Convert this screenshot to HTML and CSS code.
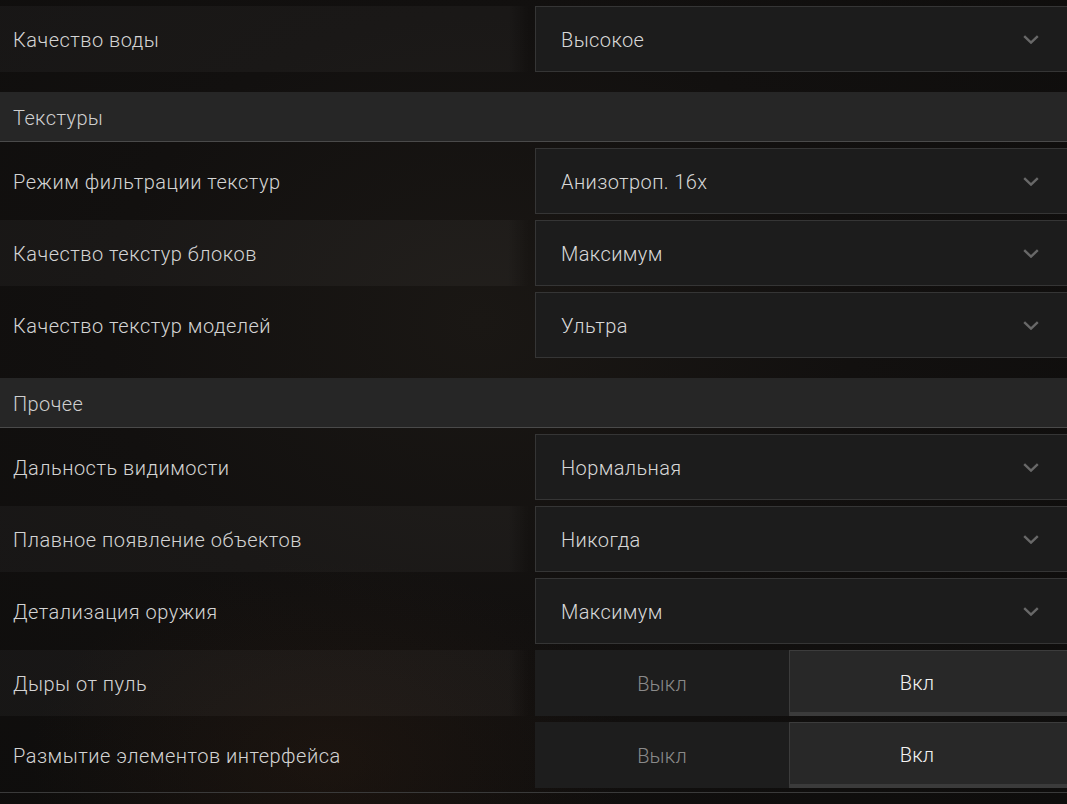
FILE: index.html
```html
<!DOCTYPE html>
<html lang="ru">
<head>
<meta charset="utf-8">
<link rel="stylesheet" href="styles.css">
</head>
<body>
<div class="page">
  <div class="row alt">
    <div class="label">Качество воды</div>
    <div class="select"><span>Высокое</span><svg class="chev" viewBox="0 0 16 9"><path d="M1.2 1.2 L8 7.6 L14.8 1.2"/></svg></div>
  </div>

  <div class="section">Текстуры</div>
  <div class="row">
    <div class="label">Режим фильтрации текстур</div>
    <div class="select"><span>Анизотроп. 16x</span><svg class="chev" viewBox="0 0 16 9"><path d="M1.2 1.2 L8 7.6 L14.8 1.2"/></svg></div>
  </div>
  <div class="row alt">
    <div class="label">Качество текстур блоков</div>
    <div class="select"><span>Максимум</span><svg class="chev" viewBox="0 0 16 9"><path d="M1.2 1.2 L8 7.6 L14.8 1.2"/></svg></div>
  </div>
  <div class="row">
    <div class="label">Качество текстур моделей</div>
    <div class="select"><span>Ультра</span><svg class="chev" viewBox="0 0 16 9"><path d="M1.2 1.2 L8 7.6 L14.8 1.2"/></svg></div>
  </div>

  <div class="section">Прочее</div>
  <div class="row">
    <div class="label">Дальность видимости</div>
    <div class="select"><span>Нормальная</span><svg class="chev" viewBox="0 0 16 9"><path d="M1.2 1.2 L8 7.6 L14.8 1.2"/></svg></div>
  </div>
  <div class="row alt">
    <div class="label">Плавное появление объектов</div>
    <div class="select"><span>Никогда</span><svg class="chev" viewBox="0 0 16 9"><path d="M1.2 1.2 L8 7.6 L14.8 1.2"/></svg></div>
  </div>
  <div class="row">
    <div class="label">Детализация оружия</div>
    <div class="select"><span>Максимум</span><svg class="chev" viewBox="0 0 16 9"><path d="M1.2 1.2 L8 7.6 L14.8 1.2"/></svg></div>
  </div>
  <div class="row alt">
    <div class="label">Дыры от пуль</div>
    <div class="toggle">
      <div class="seg off">Выкл</div>
      <div class="seg on">Вкл</div>
    </div>
  </div>
  <div class="row">
    <div class="label">Размытие элементов интерфейса</div>
    <div class="toggle">
      <div class="seg off">Выкл</div>
      <div class="seg on">Вкл</div>
    </div>
  </div>
  <div class="footer-line"></div>
</div>
</body>
</html>
```

FILE: styles.css
```css
html, body {
  margin: 0;
  padding: 0;
  height: 100%;
}
body {
  background:
    radial-gradient(ellipse 300px 200px at 330px 760px, rgba(60,36,20,0.25) 0%, rgba(60,36,20,0) 100%),
    radial-gradient(ellipse at 45% 40%, #1a1714 0%, #12100f 45%, #0e0d0c 100%);
  font-family: Roboto, "Noto Sans", "Liberation Sans", sans-serif;
  font-weight: 300;
  color: #d2d2d2;
  overflow: hidden;
}
.page {
  display: flex;
  flex-direction: column;
  padding-top: 6px;
  width: 1067px;
}
.row {
  display: flex;
  height: 66px;
  margin-bottom: 6px;
}
.label {
  width: 529px;
  flex: none;
  display: flex;
  align-items: center;
  padding-left: 13px;
  padding-top: 2px;
  box-sizing: border-box;
  font-size: 20px;
  color: #d4d4d4;
  letter-spacing: 0.5px;
}
.row.alt .label {
  background: linear-gradient(to right, rgba(255,255,255,0.035) 0%, rgba(255,255,255,0.035) 96%, rgba(255,255,255,0) 100%);
}
.select {
  margin-left: 6px;
  flex: 1;
  display: flex;
  align-items: center;
  justify-content: space-between;
  background: #1c1c1c;
  border: 1px solid #353535;
  border-right: none;
  box-sizing: border-box;
  padding-left: 25px;
  padding-right: 28px;
  font-size: 20px;
  letter-spacing: 0.4px;
  color: #d8d8d8;
}
.select span {
  padding-top: 2px;
}
.chev {
  width: 16px;
  height: 9px;
  fill: none;
  stroke: #686868;
  stroke-width: 2.4;
}
.section {
  margin-top: 14px;
  margin-bottom: 6px;
  height: 49px;
  background: #262626;
  border-bottom: 1px solid #4a4a4a;
  display: flex;
  align-items: center;
  padding-left: 13px;
  padding-top: 2px;
  box-sizing: content-box;
  height: 47px;
  font-size: 20px;
  letter-spacing: 0.4px;
  color: #cfcfcf;
}
.toggle {
  margin-left: 6px;
  flex: 1;
  display: flex;
}
.seg {
  display: flex;
  align-items: center;
  justify-content: center;
  padding-top: 2px;
  font-size: 20px;
  letter-spacing: 0.2px;
  box-sizing: border-box;
}
.seg.off {
  width: 254px;
  background: #1d1d1d;
  color: #8a8a8a;
}
.seg.on {
  flex: 1;
  background: #282828;
  border-top: 1px solid #3c3c3c;
  border-left: 1px solid #3c3c3c;
  border-bottom: 4px solid #3b3b3b;
  color: #f2f2f2;
  padding-right: 23px;
}
.footer-line {
  margin-top: -2px;
  height: 1px;
  background: #3a3a3a;
}
```
